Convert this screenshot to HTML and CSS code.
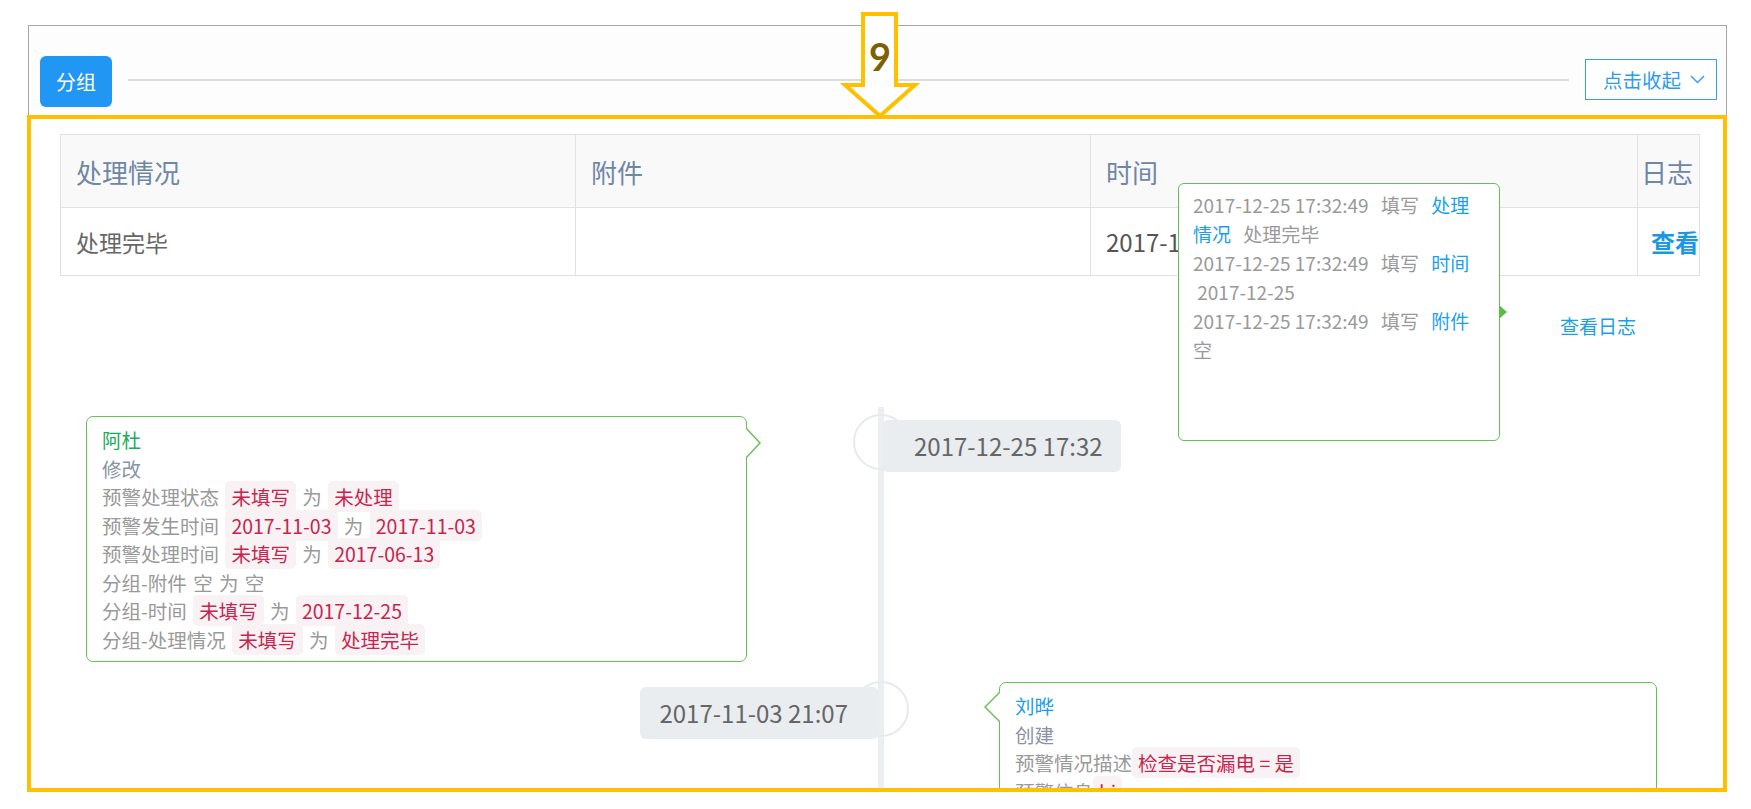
FILE: index.html
```html
<!DOCTYPE html>
<html lang="zh-CN">
<head>
<meta charset="utf-8">
<title>分组 - 处理记录</title>
<link rel="stylesheet" href="styles.css">
</head>
<body>
<div class="page">
  <section class="panel">
    <header class="group-bar">
      <span class="group-tag">分组</span>
      <span class="group-rule"></span>
      <button class="collapse-btn" type="button">点击收起
        <svg class="chev" width="15" height="9" viewBox="0 0 15 9" aria-hidden="true"><polyline points="1,1 7.5,7.5 14,1" fill="none" stroke="#3a9ef0" stroke-width="1.5"/></svg>
      </button>
    </header>

    <div class="group-body">
      <table class="grid">
        <colgroup>
          <col class="c-status"><col class="c-file"><col class="c-time"><col class="c-log">
        </colgroup>
        <thead>
          <tr><th>处理情况</th><th>附件</th><th>时间</th><th class="log-col">日志</th></tr>
        </thead>
        <tbody>
          <tr><td>处理完毕</td><td></td><td class="time-cell">2017-12-25</td><td class="log-col"><a class="view-link">查看</a></td></tr>
        </tbody>
      </table>

      <div class="log-row"><a class="log-link">查看日志</a></div>

      <div class="timeline">
        <div class="tl-item is-left">
          <div class="tl-side">
            <div class="tl-card">
              <div class="who green">阿杜</div>
              <div class="act">修改</div>
              <div class="ln">预警处理状态 <span class="tag">未填写</span> 为 <span class="tag">未处理</span></div>
              <div class="ln">预警发生时间 <span class="tag">2017-11-03</span> 为 <span class="tag">2017-11-03</span></div>
              <div class="ln">预警处理时间 <span class="tag">未填写</span> 为 <span class="tag">2017-06-13</span></div>
              <div class="ln">分组-附件 空 为 空</div>
              <div class="ln">分组-时间 <span class="tag">未填写</span> 为 <span class="tag">2017-12-25</span></div>
              <div class="ln">分组-处理情况 <span class="tag">未填写</span> 为 <span class="tag">处理完毕</span></div>
            </div>
          </div>
          <div class="tl-axis"><span class="tl-node"></span></div>
          <div class="tl-side"><span class="tl-date">2017-12-25 17:32</span></div>
        </div>

        <div class="tl-item is-right">
          <div class="tl-side"><span class="tl-date">2017-11-03 21:07</span></div>
          <div class="tl-axis"><span class="tl-node"></span></div>
          <div class="tl-side">
            <div class="tl-card">
              <div class="who blue">刘晔</div>
              <div class="act">创建</div>
              <div class="ln">预警情况描述<span class="tag">检查是否漏电 = 是</span></div>
              <div class="ln">预警信息<span class="tag">hi</span></div>
              <div class="ln">预警发生时间<span class="tag">2017-11-03</span></div>
              <div class="ln">预警处理状态<span class="tag">未处理</span></div>
            </div>
          </div>
        </div>
      </div>
    </div>
  </section>

  <div class="popover">
    <p class="entry"><span class="ts">2017-12-25 17:32:49</span> <span class="op">填写</span> <span class="fld">处理情况</span> <span class="val">处理完毕</span></p>
    <p class="entry"><span class="ts">2017-12-25 17:32:49</span> <span class="op">填写</span> <span class="fld">时间</span> <span class="val">&nbsp;2017-12-25</span></p>
    <p class="entry"><span class="ts">2017-12-25 17:32:49</span> <span class="op">填写</span> <span class="fld">附件</span> <span class="val">空</span></p>
  </div>

  <div class="callout">
    <svg class="callout-shape" width="84" height="112" viewBox="838 10 84 112" aria-hidden="true">
      <polygon points="863,14 896,14 896,85 915,85 880,116 845,85 863,85" fill="#fff" stroke="#ffc000" stroke-width="4"/>
    </svg>
    <span class="callout-num">9</span>
  </div>
  <div class="callout-frame"></div>
</div>
</body>
</html>
```

FILE: styles.css
```css
* { box-sizing: border-box; }

html, body {
  margin: 0;
  background: #fff;
}

body {
  font-family: "Noto Sans CJK SC", sans-serif;
  color: #555;
}

.page {
  position: relative;
  height: 792px;
  overflow: hidden;
  padding: 25px 24px 0 28px;
}

/* ---------- panel ---------- */
.panel {
  height: 100%;
  border: 1px solid #a6a6a6;
  border-bottom: none;
  background: #fff;
}

.group-bar {
  display: flex;
  align-items: center;
  height: 91px;
  padding: 30px 9px 10px 11px;
  background: #fdfdfd;
}

.group-tag {
  display: flex;
  align-items: center;
  justify-content: center;
  width: 72px;
  height: 51px;
  border-radius: 6px;
  background: #2196f3;
  color: #fff;
  font-size: 20px;
}

.group-rule {
  flex: 1;
  height: 2px;
  margin: 0 16px 3px;
  background: #dcdcdc;
}

.collapse-btn {
  display: flex;
  align-items: center;
  gap: 9px;
  width: 132px;
  height: 41px;
  margin-bottom: 4px;
  padding: 0 0 0 17px;
  border: 1px solid #3a9ef0;
  background: #fff;
  color: #2b9cf0;
  font-family: inherit;
  font-size: 19.5px;
}

.group-body {
  padding: 17px 27px 0 31px;
}

/* ---------- table ---------- */
.grid {
  width: 100%;
  table-layout: fixed;
  border-collapse: collapse;
}

.c-status { width: 515px; }
.c-file { width: 515px; }
.c-time { width: 547px; }
.c-log { width: 62px; }

.grid th,
.grid td {
  border: 1px solid #e1e1e1;
  padding: 0 15px;
  text-align: left;
  white-space: nowrap;
}

.grid thead tr { height: 73px; }
.grid tbody tr { height: 68px; }

.grid th {
  background: #f9f9f9;
  color: #6f87a5;
  font-size: 26px;
  font-weight: normal;
}

.grid td {
  font-size: 23px;
  color: #666;
}

.grid .time-cell { color: #555; font-size: 24px; }

.grid th.log-col { padding: 0 0 0 3px; }
.grid td.log-col { padding: 0 0 0 13px; overflow: hidden; }

.view-link {
  color: #1a98e6;
  font-weight: bold;
  font-size: 24px;
}

.log-row {
  margin-top: 36px;
  padding-right: 63px;
  text-align: right;
  font-size: 19px;
  line-height: 28px;
}

.log-link { color: #1a9ee8; }

/* ---------- timeline ---------- */
.timeline {
  position: relative;
  margin-top: 67px;
}

.timeline::before {
  content: "";
  position: absolute;
  left: 818px;
  top: 0;
  bottom: 0;
  width: 6px;
  background: #eceff2;
}

.tl-item {
  display: grid;
  grid-template-columns: 818px 6px 1fr;
  align-items: start;
}

.tl-item + .tl-item { margin-top: 20px; }

.tl-axis {
  position: relative;
  align-self: stretch;
}

.tl-node {
  position: absolute;
  left: -25px;
  width: 56px;
  height: 56px;
  border: 2px solid #e6eaee;
  border-radius: 50%;
}

.is-left .tl-node { top: 7px; }
.is-right .tl-node { top: -1px; }

.tl-date {
  position: relative;
  z-index: 1;
  display: inline-block;
  height: 52px;
  line-height: 52px;
  border-radius: 6px;
  background: #e9edf0;
  color: #666;
  font-size: 24px;
  white-space: nowrap;
}

.is-left .tl-date {
  margin: 13px 0 0 -2px;
  padding: 0 18px 0 32px;
}

.is-right .tl-side:first-child {
  display: flex;
  justify-content: flex-end;
}

.is-right .tl-date {
  margin: 5px -1px 0 0;
  padding: 0 31px 0 19px;
}

.tl-card {
  position: relative;
  background: #fff;
  border: 1px solid #66c054;
  border-radius: 7px;
  padding: 9px 15px 7px;
  font-size: 19.5px;
  line-height: 28.5px;
  word-spacing: 2px;
  color: #999;
}

.is-left .tl-card {
  width: 661px;
  margin: 9px 0 0 26px;
}

.is-right .tl-card {
  width: 658px;
  margin-left: 115px;
}

.tl-card::before,
.tl-card::after {
  content: "";
  position: absolute;
  border-style: solid;
  border-color: transparent;
}

.is-left .tl-card::before {
  right: -15px;
  top: 10px;
  border-width: 16px 0 16px 15px;
  border-left-color: #66c054;
}

.is-left .tl-card::after {
  right: -13px;
  top: 11px;
  border-width: 15px 0 15px 14px;
  border-left-color: #fff;
}

.is-right .tl-card::before {
  left: -16px;
  top: 8px;
  border-width: 16px 16px 16px 0;
  border-right-color: #66c054;
}

.is-right .tl-card::after {
  left: -14px;
  top: 9px;
  border-width: 15px 15px 15px 0;
  border-right-color: #fff;
}

.who.green { color: #1aab5b; }
.who.blue { color: #1a9ee8; }
.act { color: #8a93a3; }

.tag {
  padding: 1px 6px;
  border-radius: 5px;
  background: #f9f2f4;
  color: #c7254e;
  word-spacing: 0;
}

/* ---------- log popover ---------- */
.popover {
  position: absolute;
  left: 1178px;
  top: 183px;
  width: 322px;
  height: 258px;
  padding: 6px 14px;
  border: 1px solid #66c054;
  border-radius: 6px;
  background: #fff;
  color: #999;
  font-size: 19px;
  line-height: 29px;
}

.popover::after {
  content: "";
  position: absolute;
  right: -8px;
  top: 121px;
  border-style: solid;
  border-width: 7px 0 7px 8px;
  border-color: transparent transparent transparent #5cbd48;
}

.entry {
  margin: 0;
  word-spacing: 8px;
}

.ts {
  white-space: nowrap;
  word-spacing: 0;
}

.val {
  white-space: nowrap;
  word-spacing: 0;
}

.fld { color: #1a9fef; }

/* ---------- numbered callout ---------- */
.callout {
  position: absolute;
  left: 838px;
  top: 10px;
  width: 84px;
  height: 112px;
  text-align: center;
}

.callout-shape {
  position: absolute;
  left: 0;
  top: 0;
}

.callout-num {
  position: relative;
  display: block;
  margin-top: 27px;
  font-family: Lato, "Liberation Sans", sans-serif;
  font-weight: bold;
  font-size: 38px;
  line-height: 38px;
  color: #7f6000;
}

.callout-frame {
  position: absolute;
  left: 27px;
  top: 115px;
  width: 1700px;
  height: 677px;
  border: 4px solid #ffc000;
}
```
